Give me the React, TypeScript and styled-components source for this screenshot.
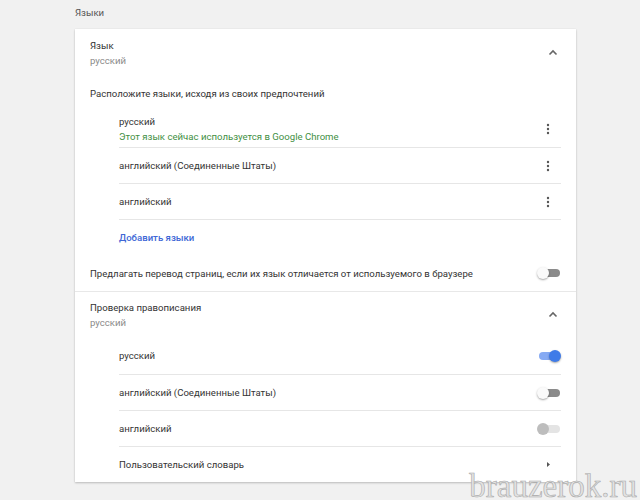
import React from 'react'
import styled, { createGlobalStyle } from 'styled-components'

const GlobalStyle = createGlobalStyle`
  *, *::before, *::after {
    box-sizing: border-box;
  }
  html, body {
    margin: 0;
    padding: 0;
    height: 100%;
    background: #f1f1f1;
    font-family: Roboto, 'Liberation Sans', Arial, sans-serif;
    font-size: 9.6px;
    color: #333;
    overflow: hidden;
  }
`

const Page = styled.div`
  position: relative;
  height: 500px;
  padding: 5px 0 0 75px;
`

const Heading = styled.div`
  height: 16px;
  line-height: 16px;
  margin-bottom: 8px;
  color: #555;
`

const Card = styled.div`
  width: 501px;
  background: #fff;
  box-shadow: 0 1px 2px rgba(0, 0, 0, 0.22), 0 0 1px rgba(0, 0, 0, 0.08);
  display: flex;
  flex-direction: column;
`

const Header = styled.div<{ $h: number }>`
  height: ${(p) => p.$h}px;
  padding: 0 10px 0 15px;
  display: flex;
  align-items: center;
  justify-content: space-between;
`

const Lines = styled.div`
  display: flex;
  flex-direction: column;
  line-height: 15px;
`

const Secondary = styled.span<{ $green?: boolean }>`
  color: ${(p) => (p.$green ? '#3f8f43' : '#8a8a8a')};
`

const Plain = styled.div<{ $h: number }>`
  height: ${(p) => p.$h}px;
  padding: 0 15px;
  display: flex;
  align-items: center;
`

const SubList = styled.div`
  padding: 0 15px 0 44px;
  display: flex;
  flex-direction: column;
`

const SubRow = styled.div<{ $h: number; $last?: boolean }>`
  height: ${(p) => p.$h}px;
  display: flex;
  align-items: center;
  justify-content: space-between;
  border-bottom: ${(p) => (p.$last ? 'none' : '1px solid #e6e6e6')};
  line-height: 16px;
`

const Link = styled.span`
  color: #4067d6;
  font-weight: 500;
`

const Translate = styled.div`
  height: 37px;
  padding: 0 15px;
  display: flex;
  align-items: center;
  justify-content: space-between;
  border-bottom: 1px solid #e8e8e8;
`

const IconSlot = styled.span`
  width: 24px;
  display: flex;
  justify-content: center;
  align-items: center;
  margin-right: 1px;
`

const Track = styled.span<{ $on?: boolean; $disabled?: boolean }>`
  position: relative;
  width: 21px;
  height: 8px;
  border-radius: 4px;
  margin-right: 1px;
  background: ${(p) => (p.$on ? '#86aaf3' : p.$disabled ? '#e4e4e4' : '#8b8b8b')};
`

const Knob = styled.span<{ $on?: boolean; $disabled?: boolean }>`
  position: absolute;
  top: -2px;
  left: ${(p) => (p.$on ? '10px' : '-2px')};
  width: 12px;
  height: 12px;
  border-radius: 50%;
  background: ${(p) => (p.$on ? '#3f7be8' : p.$disabled ? '#bdbdbd' : '#fafafa')};
  box-shadow: ${(p) => (p.$disabled ? 'none' : '0 1px 2px rgba(0,0,0,0.35)')};
`

const Watermark = styled.div`
  position: absolute;
  right: 3px;
  bottom: 0;
  line-height: 27px;
  font-family: 'Liberation Serif', 'Times New Roman', serif;
  font-size: 33px;
  color: #e2e2e2;
  -webkit-text-stroke: 0.6px #a8a8a8;
`

const Chevron = () => (
  <IconSlot>
    <svg width="10" height="7" viewBox="0 0 10 7">
      <path d="M1.5 5.5 L5 2 L8.5 5.5" fill="none" stroke="#666" strokeWidth="1.6" />
    </svg>
  </IconSlot>
)

const Kebab = () => (
  <IconSlot>
    <svg width="4" height="12" viewBox="0 0 4 12">
      <circle cx="2" cy="2" r="1.2" fill="#555" />
      <circle cx="2" cy="6" r="1.2" fill="#555" />
      <circle cx="2" cy="10" r="1.2" fill="#555" />
    </svg>
  </IconSlot>
)

const Arrow = () => (
  <IconSlot>
    <svg width="5" height="7" viewBox="0 0 5 7">
      <path d="M1 1 L4 3.5 L1 6 Z" fill="#555" />
    </svg>
  </IconSlot>
)

const Toggle: React.FC<{ on?: boolean; disabled?: boolean }> = ({ on, disabled }) => (
  <Track $on={on} $disabled={disabled}>
    <Knob $on={on} $disabled={disabled} />
  </Track>
)

const languages = ['английский (Соединенные Штаты)', 'английский']

const App: React.FC = () => (
  <>
    <GlobalStyle />
    <Page>
      <Heading>Языки</Heading>
      <Card>
        <Header $h={47}>
          <Lines>
            <span>Язык</span>
            <Secondary>русский</Secondary>
          </Lines>
          <Chevron />
        </Header>
        <Plain $h={34}>Расположите языки, исходя из своих предпочтений</Plain>
        <SubList>
          <SubRow $h={38}>
            <Lines>
              <span>русский</span>
              <Secondary $green>Этот язык сейчас используется в Google Chrome</Secondary>
            </Lines>
            <Kebab />
          </SubRow>
          {languages.map((l) => (
            <SubRow key={l} $h={36}>
              {l}
              <Kebab />
            </SubRow>
          ))}
          <SubRow $h={35} $last>
            <Link>Добавить языки</Link>
          </SubRow>
        </SubList>
        <Translate>
          Предлагать перевод страниц, если их язык отличается от используемого в браузере
          <Toggle />
        </Translate>
        <Header $h={45}>
          <Lines>
            <span>Проверка правописания</span>
            <Secondary>русский</Secondary>
          </Lines>
          <Chevron />
        </Header>
        <SubList>
          <SubRow $h={38}>
            русский
            <Toggle on />
          </SubRow>
          <SubRow $h={36}>
            английский (Соединенные Штаты)
            <Toggle />
          </SubRow>
          <SubRow $h={36}>
            английский
            <Toggle disabled />
          </SubRow>
          <SubRow $h={35} $last>
            Пользовательский словарь
            <Arrow />
          </SubRow>
        </SubList>
      </Card>
      <Watermark>brauzerok.ru</Watermark>
    </Page>
  </>
)

export default App
